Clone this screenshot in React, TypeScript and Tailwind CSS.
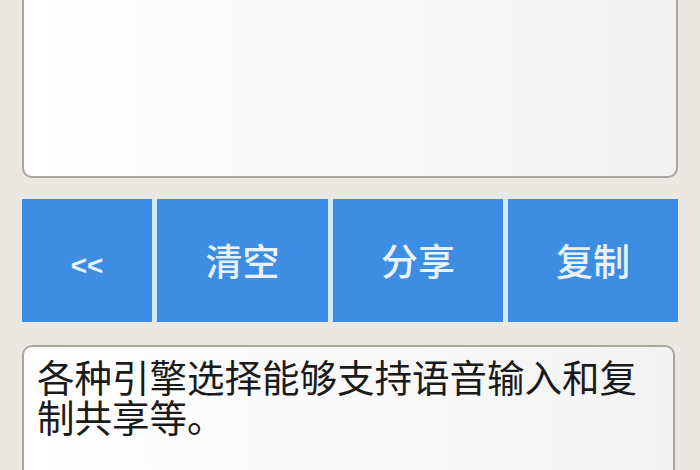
const buttons = [
  { label: "<<", small: true },
  { label: "清空" },
  { label: "分享" },
  { label: "复制" },
];

export default function App() {
  return (
    <div
      className="w-[700px] h-[470px] overflow-hidden bg-[#ebe8e4] px-[22px]"
      style={{ fontFamily: '"Noto Sans CJK SC", "Noto Sans", sans-serif' }}
    >
      {/* result box, top cut off */}
      <div className="h-[178px] rounded-b-[10px] border-2 border-t-0 border-[#a9a5a1] bg-linear-to-r from-white to-[#f2f2f2]"></div>

      <div className="mt-[21px] grid h-[123px] grid-cols-[130px_171px_170px_170px] gap-[5px] bg-[#d4eaf8]">
        {buttons.map((b) => (
          <button
            key={b.label}
            className={`flex items-center justify-center bg-[#3d8ee3] text-[#e9f1fa] ${
              b.small ? "pt-[10px] text-[28px] font-bold" : "text-[37px] font-medium"
            }`}
            style={b.small ? { fontFamily: '"Liberation Sans", sans-serif' } : undefined}
          >
            {b.label}
          </button>
        ))}
      </div>

      <div className="mt-[23px] mr-[3px] h-[200px] rounded-t-[10px] border-2 border-b-0 border-[#a9a5a1] bg-linear-to-r from-white to-[#f3f3f3] pl-[13px] pr-[13px] pt-[9px]">
        <p className="text-[37.5px] leading-[40px] text-[#1a1a1a]">
          各种引擎选择能够支持语音输入和复制共享等。
        </p>
      </div>
    </div>
  );
}
